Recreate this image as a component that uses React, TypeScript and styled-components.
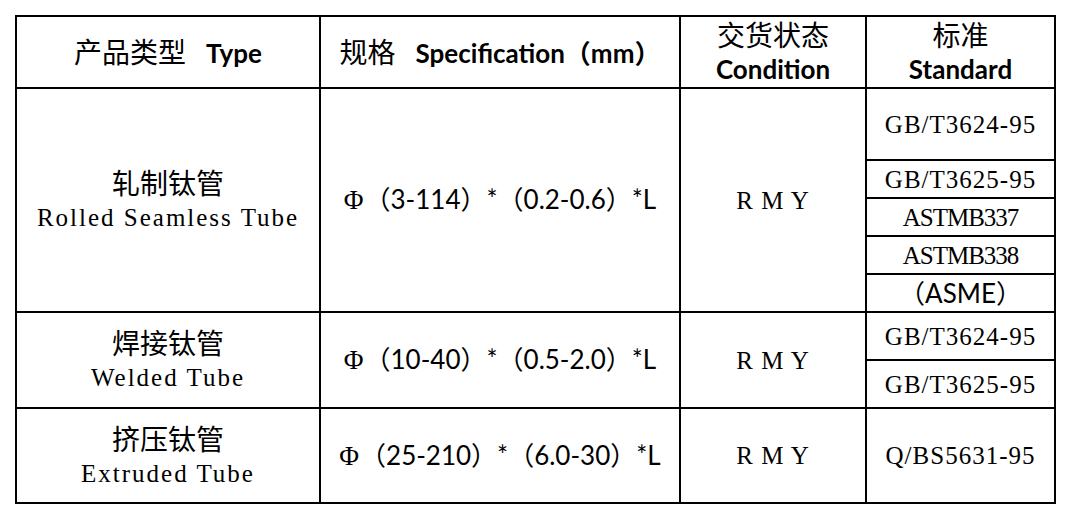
import React from 'react';
import styled, { createGlobalStyle } from 'styled-components';

const GlobalStyle = createGlobalStyle`
  body {
    margin: 0;
    background: #fff;
    color: #000;
  }
`;

const Page = styled.div`
  padding: 15px;
`;

// the black background shows through the 2px gaps and becomes the rules
const Sheet = styled.div`
  display: grid;
  grid-template-columns: 302px 358px 184px 187px;
  grid-template-rows: 70px 70px 36px 36px 36px 36px 46px 46px 93px;
  gap: 2px;
  padding: 2px;
  width: max-content;
  background: #000;
`;

const Cell = styled.div<{ $span?: number }>`
  grid-row: span ${props => props.$span ?? 1};
  display: flex;
  flex-direction: column;
  align-items: center;
  justify-content: center;
  background: #fff;
  line-height: 35px;
  text-align: center;
  white-space: nowrap;
`;

const Line = styled.div<{ $gap?: number }>`
  display: flex;
  align-items: baseline;
  gap: ${props => props.$gap ?? 0}px;
`;

const Zh = styled.span`
  font-family: 'Noto Sans CJK SC', sans-serif;
  font-size: 28px;
  font-weight: 400;
`;

const Bold = styled.span`
  font-family: Lato, 'Noto Sans CJK SC', sans-serif;
  font-size: 26px;
  font-weight: 700;
`;

// stands in for the narrow serif latin of the original
const Roman = styled.span<{ $spacing?: number }>`
  font-family: 'Liberation Serif', serif;
  font-size: 25px;
  letter-spacing: ${props => props.$spacing ?? 1}px;
  white-space: pre;
`;

const Sans = styled.span`
  font-family: Lato, 'Noto Sans CJK SC', sans-serif;
  font-size: 26px;
`;

const Phi = styled.span`
  font-family: 'Liberation Serif', serif;
  font-size: 27px;
`;

const Spec = ({ value }: { value: string }) => (
  <Line $gap={1}>
    <Phi>Φ</Phi>
    <Sans>{value}</Sans>
  </Line>
);

type Standard = { label: string; sans?: boolean; spacing?: number };

type Product = {
  zh: string;
  en: string;
  spec: string;
  standards: Standard[];
};

const products: Product[] = [
  {
    zh: '轧制钛管',
    en: 'Rolled Seamless Tube',
    spec: '（3-114）*（0.2-0.6）*L',
    standards: [
      { label: 'GB/T3624-95' },
      { label: 'GB/T3625-95' },
      { label: 'ASTMB337', spacing: -1 },
      { label: 'ASTMB338', spacing: -1 },
      { label: '（ASME）', sans: true },
    ],
  },
  {
    zh: '焊接钛管',
    en: 'Welded Tube',
    spec: '（10-40）*（0.5-2.0）*L',
    standards: [{ label: 'GB/T3624-95' }, { label: 'GB/T3625-95' }],
  },
  {
    zh: '挤压钛管',
    en: 'Extruded Tube',
    spec: '（25-210）*（6.0-30）*L',
    standards: [{ label: 'Q/BS5631-95' }],
  },
];

export default function App() {
  return (
    <Page>
      <GlobalStyle />
      <Sheet>
        <Cell>
          <Line $gap={20}>
            <Zh>产品类型</Zh>
            <Bold>Type</Bold>
          </Line>
        </Cell>
        <Cell>
          <Line $gap={20}>
            <Zh>规格</Zh>
            <Bold>Specification（mm）</Bold>
          </Line>
        </Cell>
        <Cell>
          <Zh>交货状态</Zh>
          <Bold>Condition</Bold>
        </Cell>
        <Cell>
          <Zh>标准</Zh>
          <Bold>Standard</Bold>
        </Cell>

        {products.map(product => {
          const span = product.standards.length;
          return (
            <React.Fragment key={product.en}>
              <Cell $span={span}>
                <Zh>{product.zh}</Zh>
                <Roman $spacing={2}>{product.en}</Roman>
              </Cell>
              <Cell $span={span}>
                <Spec value={product.spec} />
              </Cell>
              <Cell $span={span}>
                <Roman $spacing={1}>R M Y</Roman>
              </Cell>
              {product.standards.map(standard => (
                <Cell key={standard.label}>
                  {standard.sans ? (
                    <Sans>{standard.label}</Sans>
                  ) : (
                    <Roman $spacing={standard.spacing}>{standard.label}</Roman>
                  )}
                </Cell>
              ))}
            </React.Fragment>
          );
        })}
      </Sheet>
    </Page>
  );
}
